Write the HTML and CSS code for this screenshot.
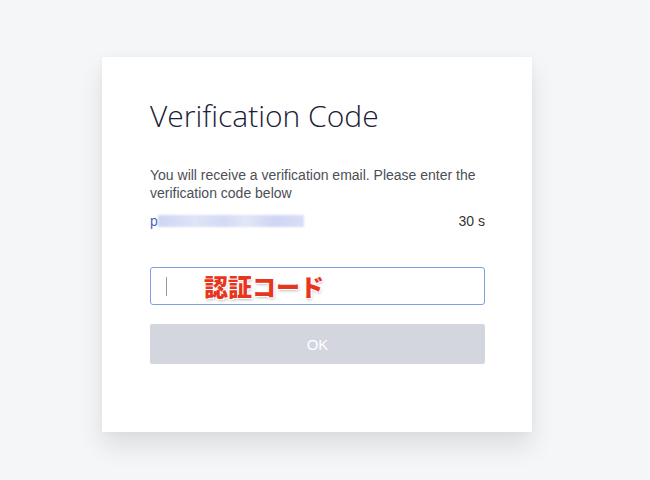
FILE: index.html
```html
<!DOCTYPE html>
<html lang="en">
  <head>
    <meta charset="UTF-8" />
    <meta name="viewport" content="width=device-width, initial-scale=1.0" />
    <title>Verification Code</title>
    <link rel="stylesheet" href="styles.css">
  </head>
  <body>
    <div class="card">
      <h1 class="title">Verification Code</h1>
      <p class="desc">
        You will receive a verification email. Please enter the verification code below
      </p>
      <div class="email-row">
        <span class="email">p<span class="blur"></span></span>
        <span class="timer">30 s</span>
      </div>
      <div class="field">
        <span class="caret"></span>
        <span class="note">認証コード</span>
      </div>
      <button class="ok-btn">OK</button>
    </div>
  </body>
</html>
```

FILE: styles.css
```css
body {
  font-family: "Liberation Sans", Arial, sans-serif;
  margin: 0;
  padding: 0;
  height: 480px;
  background-color: #f5f6f8;
  overflow: hidden;
}

.card {
  margin: 57px 0 0 102px;
  width: 430px;
  height: 375px;
  box-sizing: border-box;
  padding: 41px 47px 0 48px;
  background-color: #fff;
  box-shadow: 0 14px 24px rgba(0, 0, 0, 0.1), 0 0 6px rgba(0, 0, 0, 0.03);
}

.title {
  margin: 0;
  font-size: 30px;
  font-weight: 300;
  line-height: 36px;
  color: #1b2036;
  font-family: "Open Sans", "Liberation Sans", sans-serif;
  letter-spacing: 0;
}

.desc {
  margin: 32px 0 0;
  font-size: 14px;
  line-height: 18px;
  color: #4b4f56;
}

.email-row {
  display: flex;
  justify-content: space-between;
  align-items: center;
  margin-top: 10px;
  font-size: 14px;
  line-height: 18px;
}

.email {
  display: flex;
  align-items: center;
  color: #4a5fc1;
}

.blur {
  display: inline-block;
  width: 146px;
  height: 12px;
  background: linear-gradient(90deg, #cdd5f2, #dfe4f7 25%, #d3daf4 45%, #e2e6f8 60%, #cfd6f3 80%, #d9def6);
  filter: blur(0.8px);
}

.timer {
  color: #333;
}

.field {
  display: flex;
  align-items: center;
  margin-top: 37px;
  height: 38px;
  box-sizing: border-box;
  border: 1px solid #7f9fe3;
  border-radius: 3px;
  padding-left: 15px;
}

.caret {
  width: 1px;
  height: 19px;
  background-color: #999;
}

.note {
  margin-left: 37px;
  font-family: "Noto Sans CJK JP", sans-serif;
  font-weight: 900;
  font-size: 24px;
  line-height: 30px;
  color: #e8361e;
  text-shadow: 1px 1px 0 #fff, -1px -1px 0 #fff, 1px -1px 0 #fff, -1px 1px 0 #fff,
    1px 2px 3px rgba(0, 0, 0, 0.25);
}

.ok-btn {
  display: block;
  width: 100%;
  height: 40px;
  margin-top: 19px;
  border: none;
  border-radius: 2px;
  background-color: #d3d6de;
  color: #fff;
  font-size: 15px;
  font-family: "Liberation Sans", Arial, sans-serif;
}
```
